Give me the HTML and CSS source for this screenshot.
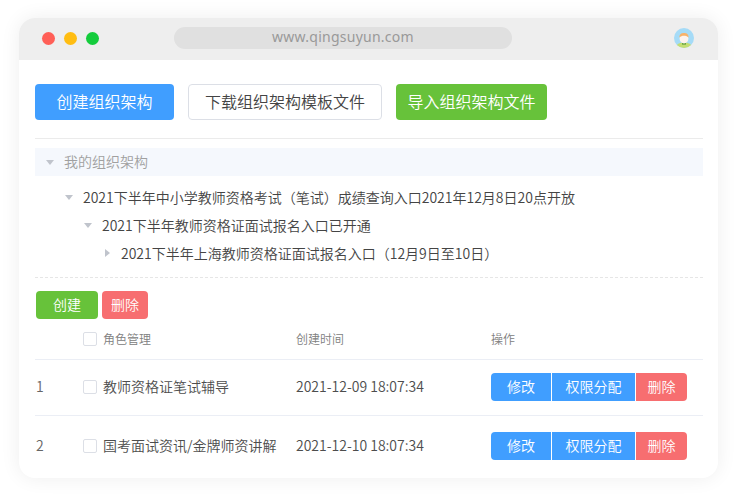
FILE: index.html
```html
<!DOCTYPE html>
<html lang="zh">
<head>
<meta charset="utf-8">
<title>组织架构</title>
<link rel="stylesheet" href="styles.css">
</head>
<body>
<div class="window">
  <header class="titlebar">
    <div class="dots"><i class="dot red"></i><i class="dot yellow"></i><i class="dot green"></i></div>
    <div class="url">www.qingsuyun.com</div>
    <svg class="avatar" width="20" height="20" viewBox="0 0 20 20">
      <defs><clipPath id="c"><circle cx="10" cy="10" r="10"/></clipPath></defs>
      <g clip-path="url(#c)">
        <rect width="20" height="20" fill="#a5dbf7"/>
        <ellipse cx="10" cy="19" rx="8" ry="4.5" fill="#c4de73"/>
        <rect x="8" y="15" width="4" height="1.6" fill="#5f9e3a"/>
        <ellipse cx="10" cy="10.5" rx="4.4" ry="5" fill="#fdf3ee"/>
        <path d="M5.4 9.5C5.2 6.4 7.2 5 10 5s4.8 1.4 4.6 4.5C13.2 8.2 11.2 7.8 9.8 7.8 8.2 7.8 6.6 8.3 5.4 9.5z" fill="#f8b26a"/>
      </g>
    </svg>
  </header>
  <main class="content">
    <div class="toolbar">
      <button class="btn lg primary w1">创建组织架构</button>
      <button class="btn lg plain w2">下载组织架构模板文件</button>
      <button class="btn lg success w3">导入组织架构文件</button>
    </div>
    <section class="tree">
      <div class="tree-head"><i class="caret down"></i><span>我的组织架构</span></div>
      <div class="node l1"><i class="caret down"></i><span>2021下半年中小学教师资格考试（笔试）成绩查询入口2021年12月8日20点开放</span></div>
      <div class="node l2"><i class="caret down"></i><span>2021下半年教师资格证面试报名入口已开通</span></div>
      <div class="node l3"><i class="caret right"></i><span>2021下半年上海教师资格证面试报名入口（12月9日至10日）</span></div>
    </section>
    <div class="actions">
      <button class="btn md success create">创建</button>
      <button class="btn md danger remove">删除</button>
    </div>
    <div class="row head">
      <div></div>
      <div class="name"><i class="check"></i><span>角色管理</span></div>
      <div class="cell">创建时间</div>
      <div class="cell">操作</div>
    </div>
    <div class="row item">
      <div class="idx cell">1</div>
      <div class="name"><i class="check"></i><span>教师资格证笔试辅导</span></div>
      <div class="cell">2021-12-09 18:07:34</div>
      <div class="ops"><button class="btn op primary edit first">修改</button><button class="btn op primary perm">权限分配</button><button class="btn op danger del last">删除</button></div>
    </div>
    <div class="row item second">
      <div class="idx cell">2</div>
      <div class="name"><i class="check"></i><span>国考面试资讯/金牌师资讲解</span></div>
      <div class="cell">2021-12-10 18:07:34</div>
      <div class="ops"><button class="btn op primary edit first">修改</button><button class="btn op primary perm">权限分配</button><button class="btn op danger del last">删除</button></div>
    </div>
  </main>
</div>
</body>
</html>
```
FILE: styles.css
```css
* { box-sizing: border-box; }
html, body { margin: 0; height: 100%; }
body {
  width: 736px; height: 496px; overflow: hidden; background: #fff;
  padding: 18px 18px 18px 19px;
  font-family: "Noto Sans CJK SC", "Noto Sans", sans-serif;
  font-weight: 350;
  color: #444;
}
.window {
  width: 699px; height: 460px; border-radius: 16px; background: #fff; overflow: hidden;
  box-shadow: 0 0 20px rgba(0, 0, 0, .07);
}
.titlebar {
  height: 42px; background: #eee; display: flex; align-items: center;
  padding: 0 14px 2px 23px;
}
.dots { display: flex; gap: 9px; width: 132px; }
.dot { width: 13px; height: 13px; border-radius: 50%; display: block; }
.red { background: #ff5f57; }
.yellow { background: #ffbd12; }
.green { background: #14cc3c; }
.url {
  width: 338px; height: 22px; border-radius: 11px; background: #e0e0e0; color: #999;
  font: 400 14px/20px "Noto Sans", sans-serif; text-align: center; letter-spacing: .25px;
}
.avatar { margin-left: auto; margin-right: 10px; }
.content { padding: 24px 15px 0 16px; }
.toolbar { display: flex; gap: 14px; padding-bottom: 18px; border-bottom: 1px solid #ebebeb; }
.btn { border: 0; padding: 0 0 2px; border-radius: 4px; font-family: inherit; font-weight: 350; color: #fff; display: block; }
.lg { height: 36px; font-size: 16px; }
.w1 { width: 139px; }
.w2 { width: 194px; }
.w3 { width: 151px; }
.primary { background: #409eff; }
.success { background: #67c23a; }
.danger { background: #f76e70; }
.plain { background: #fff; border: 1px solid #dcdfe6; color: #444; }
.tree { margin-top: 9px; height: 130px; border-bottom: 1px dashed #e6e6e6; font-size: 14px; }
.tree-head {
  height: 28px; background: #f5f8fd; display: flex; align-items: center; gap: 9px;
  padding-left: 10px; color: #a0a0a0;
}
.tree-head span { padding-bottom: 2px; }
.node { height: 28px; display: flex; align-items: center; gap: 9px; color: #444; }
.node span { white-space: nowrap; }
.l1 { margin-top: 7px; padding-left: 29px; }
.l2 { padding-left: 48px; }
.l3 { padding-left: 67px; }
.caret { width: 10px; height: 10px; display: flex; align-items: center; justify-content: center; flex: none; }
.caret::before { content: ""; display: block; border-style: solid; border-color: transparent; }
.caret.down::before { border-width: 5px 4.5px 0; border-top-color: #c0c4cc; }
.caret.right::before { border-width: 4.5px 0 4.5px 5px; border-left-color: #c0c4cc; }
.actions { display: flex; gap: 4px; padding: 13px 0 0 1px; }
.md { height: 28px; font-size: 14px; }
.create { width: 62px; }
.remove { width: 46px; }
.row {
  display: grid; grid-template-columns: 48px 213px 195px 1fr; font-size: 14px; align-items: center;
  border-bottom: 1px solid #ebeef5;
}
.head { height: 41px; font-size: 12px; color: #808080; }
.item { height: 56px; color: #4d4d4d; font-size: 14px; padding-bottom: 1px; }
.second { height: 60px; border-bottom: 0; padding-bottom: 0; }
.cell, .name span { padding-bottom: 2px; }
.idx { padding-left: 1px; color: #666; }
.name { display: flex; align-items: center; gap: 6px; white-space: nowrap; }
.check { width: 14px; height: 14px; border: 1px solid #dcdfe6; border-radius: 2px; background: #fff; flex: none; }
.ops { display: flex; gap: 1px; }
.op { height: 28px; font-size: 14px; border-radius: 0; }
.edit { width: 60px; }
.perm { width: 83px; }
.del { width: 51px; }
.first { border-radius: 4px 0 0 4px; }
.last { border-radius: 0 4px 4px 0; }
```
